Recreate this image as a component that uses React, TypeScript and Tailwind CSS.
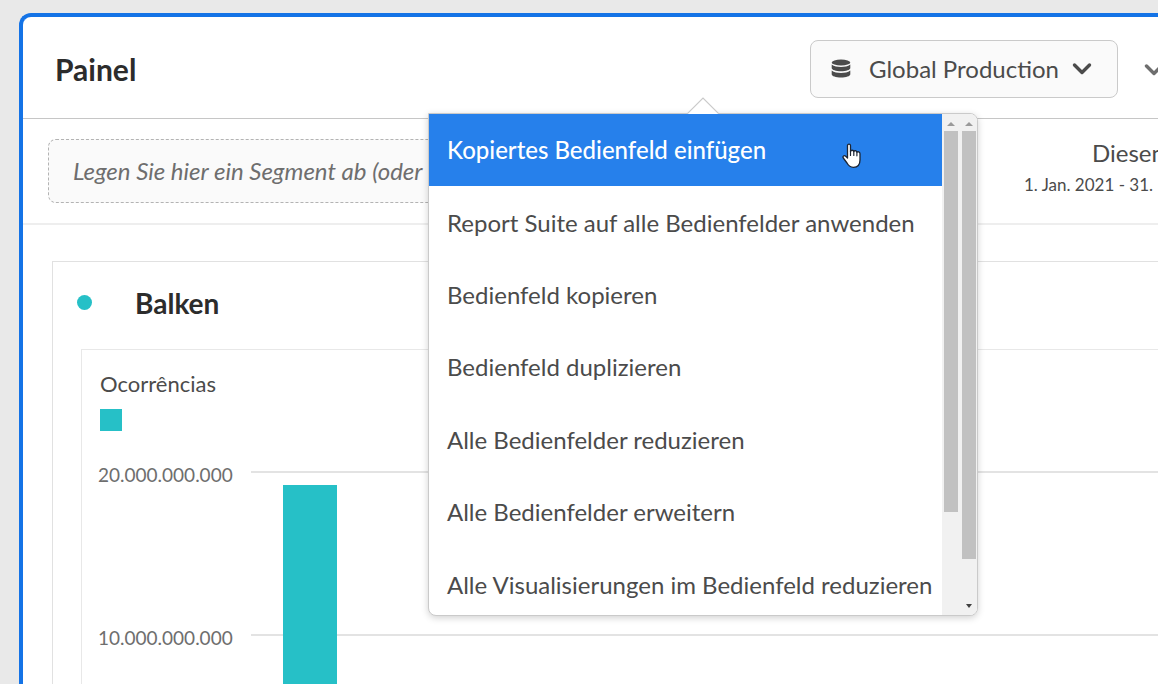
const menuItems = [
  'Kopiertes Bedienfeld einfügen',
  'Report Suite auf alle Bedienfelder anwenden',
  'Bedienfeld kopieren',
  'Bedienfeld duplizieren',
  'Alle Bedienfelder reduzieren',
  'Alle Bedienfelder erweitern',
  'Alle Visualisierungen im Bedienfeld reduzieren',
];

const ticks = ['20.000.000.000', '10.000.000.000'];

function DatabaseIcon() {
  return (
    <svg width="20" height="20" viewBox="0 0 20 20" fill="#4b4b4b" aria-hidden="true">
      <ellipse cx="10" cy="3.500" rx="9.300" ry="3" />
      <path d="M.7 5.600C3 7.600 6.500 8 10 8S17 7.600 19.300 5.600V9C19.300 11 15 12.200 10 12.200S.7 11 .7 9Z" />
      <path d="M.7 11.600C3 13.600 6.500 14 10 14S17 13.600 19.300 11.600V15.200C19.300 17.200 15 18.400 10 18.400S.7 17.200 .7 15.200Z" />
    </svg>
  );
}

function Chevron({ color }: { color: string }) {
  return (
    <svg className="shrink-0" width="20" height="14" viewBox="0 0 20 14" fill="none" aria-hidden="true">
      <path d="M2.500 3L10 10.500L17.500 3" stroke={color} strokeWidth="3.400" strokeLinecap="round" strokeLinejoin="round" />
    </svg>
  );
}

function Arrow({ down = false }: { down?: boolean }) {
  return (
    <svg width="8" height="4" viewBox="0 0 8 4" aria-hidden="true">
      {down ? <path d="M1 0H7L4 4Z" fill="#404040" /> : <path d="M0 4H8L4 0Z" fill="#9a9a9a" />}
    </svg>
  );
}

function HandCursor() {
  return (
    <svg width="20" height="26" viewBox="0 0 20 26" aria-hidden="true">
      <path
        d="M5.500 2.500C5.500 .6 8.500 .6 8.500 2.500V8.500C9 6.700 11.500 6.900 11.800 8.600C12.500 7.200 14.600 7.500 14.900 9.200C15.800 8.300 18 8.800 18 10.800V17C18 21.500 15.500 24.300 11.500 24.300C8 24.300 6.500 22.800 5 20L1.300 15C.2 13.200 2.300 12 3.700 13.300L5.500 15Z"
        fill="#fff"
        stroke="#1b2433"
        strokeWidth="1.300"
        strokeLinejoin="round"
      />
      <path d="M8.500 8V12.500M11.800 8.600V12.500M14.900 9.200V12.800" stroke="#1b2433" strokeWidth="1.200" strokeLinecap="round" />
    </svg>
  );
}

function PanelMenu() {
  return (
    <div className="absolute top-[73px] right-[140px] z-10 w-[550px]">
      <div className="flex h-[503px] overflow-hidden rounded-lg rounded-tl-none border border-[#cacaca] bg-white shadow-[0_2px_7px_rgba(0,0,0,0.18)]">
        <div role="menu" className="flex h-[507px] flex-1 flex-col">
          {menuItems.map((item, i) => (
            <button
              key={item}
              role="menuitem"
              type="button"
              className={
                i === 0
                  ? 'flex-1 bg-[#2680eb] pl-[18px] text-left text-2xl font-medium whitespace-nowrap text-white'
                  : 'flex-1 pl-[18px] text-left text-2xl whitespace-nowrap text-[#4b4b4b]'
              }
            >
              {item}
            </button>
          ))}
        </div>
        <div className="flex w-[18px] flex-col items-center bg-[#f1f1f1] pt-2">
          <Arrow />
          <div className="mt-[5px] h-[381px] w-[14px] bg-[#c1c1c1]" />
        </div>
        <div className="flex w-[17px] flex-col items-center bg-[#f1f1f1] pt-2 pb-[7px]">
          <Arrow />
          <div className="mt-[5px] mb-auto h-[428px] w-[14px] bg-[#c1c1c1]" />
          <Arrow down />
        </div>
      </div>
      <svg className="absolute -top-4 left-[259px]" width="32" height="17" viewBox="0 0 32 17" aria-hidden="true">
        <path d="M0 17L16 1L32 17Z" fill="#fff" />
        <path d="M0 17L16 1L32 17" fill="none" stroke="#cacaca" strokeWidth="1.200" />
      </svg>
      <div className="absolute top-[30px] left-[414px]">
        <HandCursor />
      </div>
    </div>
  );
}

export default function App() {
  return (
    <main className="flex h-screen overflow-hidden bg-[#e9e9e9] pt-[13px] pl-[19px] font-['Lato','Noto_Sans',sans-serif] text-[#4b4b4b]">
      <section className="flex min-w-0 flex-1 flex-col rounded-tl-xl border-t-4 border-l-4 border-[#1473e6] bg-white">
        <header className="flex h-[102px] shrink-0 items-center border-b border-[#c6c6c6] pl-8">
          <h1 className="mt-1 flex-1 text-[30px] font-bold text-[#2c2c2c]">Painel</h1>
          <div className="relative mt-[3px] mr-[26px]">
            <button
              type="button"
              aria-haspopup="menu"
              className="flex h-[58px] w-[308px] items-center rounded-lg border border-[#cacaca] bg-[#fafafa] pr-[25px] pl-5 text-2xl"
            >
              <DatabaseIcon />
              <span className="flex-1 pl-[18px] text-left whitespace-nowrap">Global Production</span>
              <Chevron color="#4b4b4b" />
            </button>
            <PanelMenu />
          </div>
          <button type="button" aria-label="Bedienfeld reduzieren" className="mt-1 flex w-[14px]">
            <Chevron color="#6e6e6e" />
          </button>
        </header>

        <div className="flex h-[106px] shrink-0 items-start justify-between border-b-2 border-[#eeeeee] pt-5 pl-[25px]">
          <div className="flex h-16 w-1/2 items-center rounded-lg border border-dashed border-[#b3b3b3] bg-[#fafafa] pl-6 text-2xl whitespace-nowrap text-[#6e6e6e] italic">
            Legen Sie hier ein Segment ab (oder
          </div>
          <div className="flex w-[134px] flex-col whitespace-nowrap">
            <span className="pl-[68px] text-2xl leading-7">Diesen</span>
            <span className="text-[17px] leading-9">1. Jan. 2021 - 31.</span>
          </div>
        </div>

        <article className="mt-9 ml-[29px] flex flex-1 flex-col border-t border-l border-[#e1e1e1] pl-7">
          <div className="flex h-[87px] shrink-0 items-center pb-[6px]">
            <span className="-ml-1 size-[15px] rounded-full bg-[#26c0c7]" />
            <h2 className="pl-[43px] text-[28px] font-bold text-[#2c2c2c]">Balken</h2>
          </div>
          <div className="flex-1 border-t border-l border-[#e8e8e8] pt-[18px] pl-4">
            <div className="pl-[2px] text-[22px] leading-8">Ocorrências</div>
            <div className="mt-[9px] ml-[2px] size-[22px] bg-[#26c0c7]" />
            <div className="mt-7 flex">
              <div className="w-[133px] text-right text-[19px] text-[#6e6e6e]">
                {ticks.map((tick) => (
                  <div key={tick} className="h-[163px] leading-8">
                    {tick}
                  </div>
                ))}
              </div>
              <svg className="ml-5 h-60 flex-1" aria-hidden="true">
                <rect y="12" width="100%" height="2" fill="#e3e3e3" />
                <rect y="175" width="100%" height="2" fill="#e3e3e3" />
                <rect x="32" y="26" width="54" height="240" fill="#26c0c7" />
              </svg>
            </div>
          </div>
        </article>
      </section>
    </main>
  );
}
